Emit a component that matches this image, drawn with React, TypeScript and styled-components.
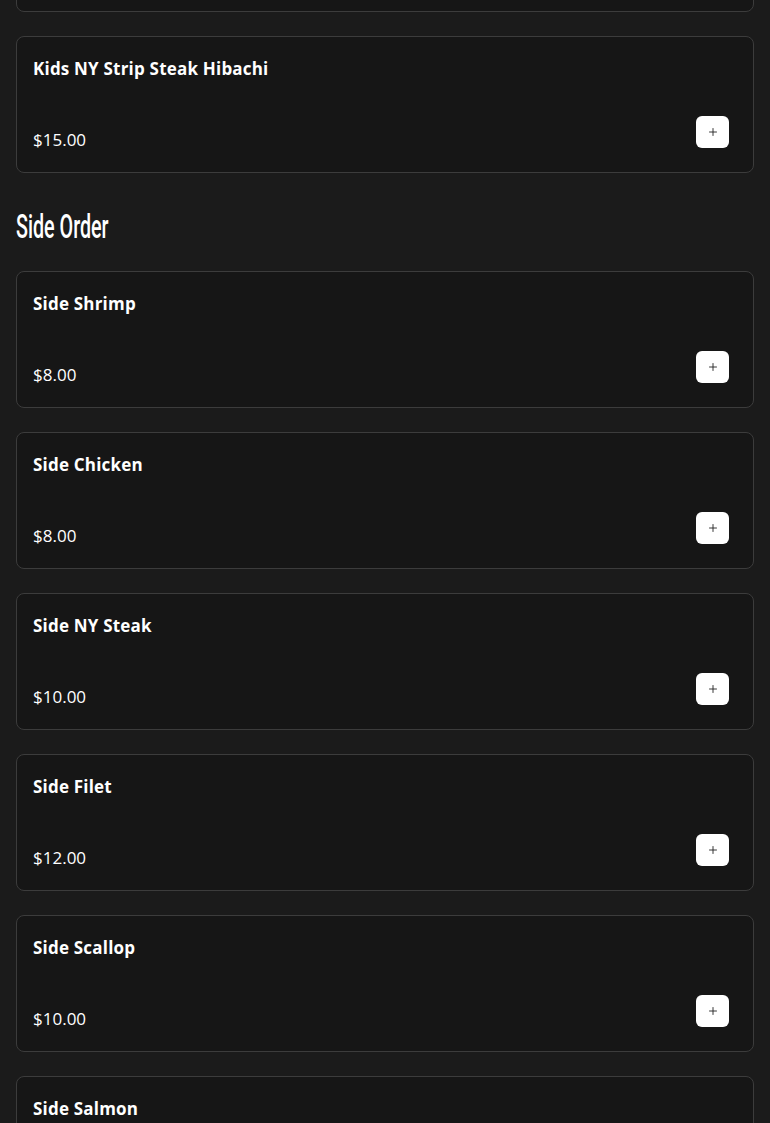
import React from "react";
import styled, { createGlobalStyle } from "styled-components";
import { Plus } from "lucide-react";

const GlobalStyle = createGlobalStyle`
  html, body {
    margin: 0;
    padding: 0;
    background: #1b1b1b;
  }
  body {
    font-family: "Open Sans", "Liberation Sans", sans-serif;
    color: #ffffff;
  }
`;

interface MenuItem {
  name: string;
  price: string;
}

interface MenuSection {
  title?: string;
  items: MenuItem[];
}

const sections: MenuSection[] = [
  {
    items: [
      { name: "Kids Chicken Hibachi", price: "$13.00" },
      { name: "Kids NY Strip Steak Hibachi", price: "$15.00" },
    ],
  },
  {
    title: "Side Order",
    items: [
      { name: "Side Shrimp", price: "$8.00" },
      { name: "Side Chicken", price: "$8.00" },
      { name: "Side NY Steak", price: "$10.00" },
      { name: "Side Filet", price: "$12.00" },
      { name: "Side Scallop", price: "$10.00" },
      { name: "Side Salmon", price: "$12.00" },
    ],
  },
];

const ItemCard: React.FC<MenuItem> = ({ name, price }) => (
  <Card>
    <ItemName>{name}</ItemName>
    <CardFooter>
      <Price>{price}</Price>
      <AddButton type="button" aria-label={`Add ${name}`}>
        <Plus size={12} strokeWidth={1.8} />
      </AddButton>
    </CardFooter>
  </Card>
);

export default function App() {
  return (
    <>
      <GlobalStyle />
      <Page>
        {sections.map((section, i) => (
          <Section key={i}>
            {section.title && <SectionTitle>{section.title}</SectionTitle>}
            <CardList>
              {section.items.map((item) => (
                <ItemCard key={item.name} {...item} />
              ))}
            </CardList>
          </Section>
        ))}
      </Page>
    </>
  );
}

const Page = styled.main`
  margin-top: -125px;
  padding: 0 16px 40px;
  display: flex;
  flex-direction: column;
  gap: 38px;
`;

const Section = styled.section`
  display: flex;
  flex-direction: column;
`;

const SectionTitle = styled.h2`
  margin: 0 0 30px;
  font-family: "Roboto", "Liberation Sans", sans-serif;
  font-weight: 500;
  font-size: 34px;
  line-height: 30px;
  color: #ffffff;
  transform: scaleX(0.58);
  transform-origin: left center;
  white-space: nowrap;
`;

const CardList = styled.div`
  display: flex;
  flex-direction: column;
  gap: 24px;
`;

const Card = styled.div`
  box-sizing: border-box;
  height: 137px;
  display: flex;
  flex-direction: column;
  justify-content: space-between;
  padding: 20px 24px 24px 16px;
  background: #161616;
  border: 1px solid #3c3c3c;
  border-radius: 8px;
`;

const ItemName = styled.div`
  font-size: 17px;
  font-weight: 700;
  line-height: 24px;
  letter-spacing: 0.2px;
`;

const CardFooter = styled.div`
  display: flex;
  align-items: flex-end;
  justify-content: space-between;
`;

const Price = styled.span`
  font-size: 17px;
  font-weight: 400;
  line-height: 20px;
  margin-bottom: -2px;
`;

const AddButton = styled.button`
  width: 33px;
  height: 32px;
  padding: 0;
  display: flex;
  align-items: center;
  justify-content: center;
  background: #ffffff;
  color: #222222;
  border: none;
  border-radius: 6px;
  cursor: pointer;
`;
